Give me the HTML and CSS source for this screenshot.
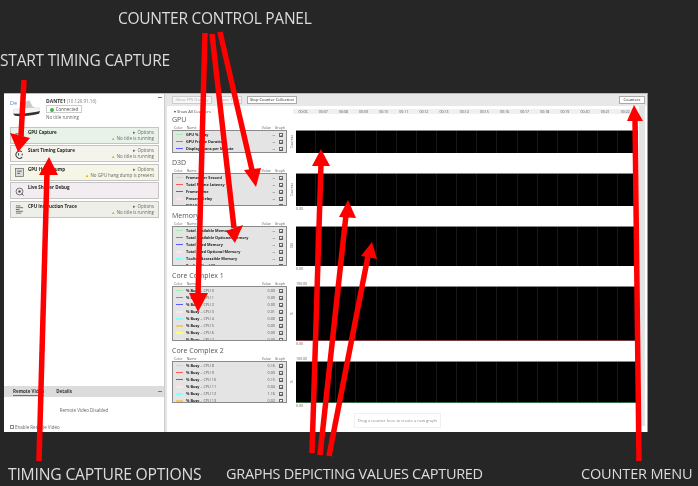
FILE: index.html
```html
<!DOCTYPE html>
<html lang="en">
<head>
<meta charset="utf-8">
<title>Counter Control Panel</title>
<link rel="stylesheet" href="styles.css">
</head>
<body>
<header class="top-captions">
  <p class="caption caption-counter">COUNTER CONTROL PANEL</p>
  <p class="caption caption-start">START TIMING CAPTURE</p>
</header>

<main class="window">
  <aside class="left">
    <div class="device">
      <span class="dev-tab">De</span>
      <svg class="console" viewBox="0 0 28 18"><path d="M11 2l6-2 3 6 3 2-9 1-7-2z" fill="#c9c9c9"/><path d="M0 10c6-2 20-3 28-2v4c-8 2-20 3-28 2z" fill="#f4f4f4" stroke="#ccc" stroke-width=".4"/><path d="M0 14c8 0 20-1 28-3l-1 3c-8 2-19 3-25 2z" fill="#333"/></svg>
      <div class="device-info">
        <div class="device-name"><b>DANTE1</b> <span>(10.120.91.16)</span></div>
        <div class="pill"><i class="dot"></i>Connected</div>
        <div class="no-title">No title running</div>
      </div>
      <span class="collapse"></span>
    </div>

    <section class="card card-green">
      <svg class="card-icon" viewBox="0 0 10 10"><rect x="1" y="2" width="8" height="6" fill="none" stroke="#555"/></svg>
      <b>GPU Capture</b>
      <div class="card-side"><span>▸ Options</span><span><em>▲</em> No title is running</span></div>
    </section>
    <section class="card card-cream">
      <svg class="card-icon" viewBox="0 0 10 10"><path d="M7.5 2A4 4 0 1 0 8 8M4 3.5v2.500M8 4v2" fill="none" stroke="#444" stroke-width="1.200"/></svg>
      <b>Start Timing Capture</b>
      <div class="card-side"><span>▸ Options</span><span><em>▲</em> No title is running</span></div>
    </section>
    <section class="card card-yellow">
      <svg class="card-icon" viewBox="0 0 10 10"><rect x=".5" y=".5" width="9" height="9" fill="#ddd" stroke="#666" stroke-width=".8"/><path d="M2.500 3.500h5M2.500 6h3" stroke="#555"/></svg>
      <b>GPU Hang Dump</b>
      <div class="card-side"><span>▸ Options</span><span><em>▲</em> No GPU hang dump is present</span></div>
    </section>
    <section class="card card-pink">
      <svg class="card-icon" viewBox="0 0 10 10"><circle cx="5" cy="5" r="3.800" fill="none" stroke="#555" stroke-width=".9"/><circle cx="5" cy="5" r="1.300" fill="#444"/><path d="M7.500 7.500l2 2" stroke="#444"/></svg>
      <b>Live Shader Debug</b>
    </section>
    <section class="card card-grey">
      <svg class="card-icon" viewBox="0 0 10 10"><path d="M1 1h5M1 3h8M1 5h4M1 7h8M1 9h6" stroke="#555" stroke-width=".9"/></svg>
      <b>CPU Instruction Trace</b>
      <div class="card-side"><span>▸ Options</span><span><em>▲</em> No title is running</span></div>
    </section>

    <section class="remote">
      <div class="tabs"><b class="tab-active">Remote Video</b><b>Details</b><span class="collapse"></span></div>
      <div class="remote-body">Remote Video Disabled</div>
      <label class="remote-check"><i></i>Enable Remote Video</label>
    </section>
  </aside>

  <section class="right">
    <div class="toolbar">
      <span class="btn btn-off btn-fps">Show FPS Overlay</span>
      <span class="btn btn-off btn-pause">Pause Trace</span>
      <span class="btn btn-stop">Stop Counter Collection</span>
      <span class="btn btn-counters">Counters</span>
    </div>
    <div class="content">
      <div class="counters">
        <div class="show-all">▾ Show All Counters</div>

        <h2>GPU</h2>
        <div class="cols"><span>Color</span><span>Name</span><span class="col-value">Value</span><span>Graph</span></div>
        <div class="panel panel-1">
          <div class="row"><i class="sw s1"></i><b>GPU % Busy</b><span class="val">--</span><span class="x">×</span></div>
          <div class="row"><i class="sw s2"></i><b>GPU Frame Duration</b><span class="val">--</span><span class="x">×</span></div>
          <div class="row"><i class="sw s3"></i><b>Display Scans per Minute</b><span class="val">--</span><span class="x">×</span></div>
        </div>

        <h2>D3D</h2>
        <div class="cols"><span>Color</span><span>Name</span><span class="col-value">Value</span><span>Graph</span></div>
        <div class="panel panel-2">
          <div class="row"><i class="sw s1"></i><b>Frames per Second</b><span class="val">--</span><span class="x">×</span></div>
          <div class="row"><i class="sw s2"></i><b>Total Frame Latency</b><span class="val">--</span><span class="x">×</span></div>
          <div class="row"><i class="sw s3"></i><b>Frame Time</b><span class="val">--</span><span class="x">×</span></div>
          <div class="row"><i class="sw s4"></i><b>Present Delay</b><span class="val">--</span><span class="x">×</span></div>
          <div class="row"><i class="sw s5"></i><b>BVH Surfaces</b><span class="val">--</span><span class="x">×</span></div>
        </div>

        <h2>Memory</h2>
        <div class="cols"><span>Color</span><span>Name</span><span class="col-value">Value</span><span>Graph</span></div>
        <div class="panel panel-3">
          <div class="row"><i class="sw s1"></i><b>Total Available Memory</b><span class="val">--</span><span class="x">×</span></div>
          <div class="row"><i class="sw s2"></i><b>Total Available Optional Memory</b><span class="val">--</span><span class="x">×</span></div>
          <div class="row"><i class="sw s3"></i><b>Total Used Memory</b><span class="val">--</span><span class="x">×</span></div>
          <div class="row"><i class="sw s4"></i><b>Total Used Optional Memory</b><span class="val">--</span><span class="x">×</span></div>
          <div class="row"><i class="sw s5"></i><b>Tooling Accessible Memory</b><span class="val">--</span><span class="x">×</span></div>
          <div class="row"><i class="sw s6"></i><b>Tooling Used Memory</b><span class="val">--</span><span class="x">×</span></div>
        </div>

        <h2>Core Complex 1</h2>
        <div class="cols"><span>Color</span><span>Name</span><span class="col-value">Value</span><span>Graph</span></div>
        <div class="panel panel-4">
          <div class="row"><i class="sw s1"></i><b>% Busy</b> – CPU 0<span class="val">0.00</span><span class="x">×</span></div>
          <div class="row"><i class="sw s2"></i><b>% Busy</b> – CPU 1<span class="val">0.00</span><span class="x">×</span></div>
          <div class="row"><i class="sw s3"></i><b>% Busy</b> – CPU 2<span class="val">0.00</span><span class="x">×</span></div>
          <div class="row"><i class="sw s4"></i><b>% Busy</b> – CPU 3<span class="val">0.01</span><span class="x">×</span></div>
          <div class="row"><i class="sw s5"></i><b>% Busy</b> – CPU 4<span class="val">0.00</span><span class="x">×</span></div>
          <div class="row"><i class="sw s6"></i><b>% Busy</b> – CPU 5<span class="val">0.00</span><span class="x">×</span></div>
          <div class="row"><i class="sw s7"></i><b>% Busy</b> – CPU 6<span class="val">0.00</span><span class="x">×</span></div>
          <div class="row"><i class="sw s4"></i><b>% Busy</b> – CPU 7<span class="val">0.00</span><span class="x">×</span></div>
        </div>

        <h2>Core Complex 2</h2>
        <div class="cols"><span>Color</span><span>Name</span><span class="col-value">Value</span><span>Graph</span></div>
        <div class="panel panel-5">
          <div class="row"><i class="sw s1"></i><b>% Busy</b> – CPU 8<span class="val">0.16</span><span class="x">×</span></div>
          <div class="row"><i class="sw s2"></i><b>% Busy</b> – CPU 9<span class="val">0.03</span><span class="x">×</span></div>
          <div class="row"><i class="sw s3"></i><b>% Busy</b> – CPU 10<span class="val">0.15</span><span class="x">×</span></div>
          <div class="row"><i class="sw s4"></i><b>% Busy</b> – CPU 11<span class="val">0.04</span><span class="x">×</span></div>
          <div class="row"><i class="sw s5"></i><b>% Busy</b> – CPU 12<span class="val">1.16</span><span class="x">×</span></div>
          <div class="row"><i class="sw s6"></i><b>% Busy</b> – CPU 13<span class="val">0.02</span><span class="x">×</span></div>
        </div>
      </div>

      <div class="graphs">
        <div class="timeline">
          <span>00:06</span><span>00:07</span><span>00:08</span><span>00:09</span><span>00:10</span><span>00:11</span><span>00:12</span><span>00:13</span><span>00:14</span><span>00:15</span><span>00:16</span><span>00:17</span><span>00:18</span><span>00:19</span><span>00:20</span><span>00:21</span><span>00:22</span>
        </div>
        <div class="graph panel-1"><span class="unit">Counter</span><div class="plot"></div></div>
        <div class="scale"></div>
        <div class="graph panel-2"><span class="unit">Counter</span><div class="plot"></div></div>
        <div class="scale"><span>0.00</span></div>
        <div class="graph panel-3"><span class="unit">GB</span><div class="plot"></div></div>
        <div class="scale"><span>0.00</span><span>100.00</span></div>
        <div class="graph panel-4"><span class="unit">%</span><div class="plot plot-red"></div></div>
        <div class="scale"><span>0.00</span><span>100.00</span></div>
        <div class="graph panel-5"><span class="unit">%</span><div class="plot plot-green"></div></div>
        <div class="scale scale-last"><span>0.00</span></div>
        <div class="drop">Drag a counter here to create a new graph</div>
      </div>
      <div class="scrollbar"></div>
    </div>
  </section>
</main>

<footer class="bottom-captions">
  <p class="caption caption-options">TIMING CAPTURE OPTIONS</p>
  <p class="caption caption-graphs">GRAPHS DEPICTING VALUES CAPTURED</p>
  <p class="caption caption-menu">COUNTER MENU</p>
</footer>

<svg class="arrows" viewBox="0 0 698 486" aria-hidden="true">
  <g class="shafts">
    <path d="M24 80L21 136"/>
    <path d="M39 461L47 172"/>
    <path d="M205 33L198 296"/>
    <path d="M212 34L234 228"/>
    <path d="M220 32L252 170"/>
    <path d="M312 453L321 163"/>
    <path d="M320 455L346 215"/>
    <path d="M329 456L368 256"/>
    <path d="M639 461L635 118"/>
  </g>
  <g class="heads">
    <polygon points="10,133 30,138 18,152"/>
    <polygon points="39,175 58,175 49,157"/>
    <polygon points="189,293 208,293 198,312"/>
    <polygon points="226,231 243,225 235,243"/>
    <polygon points="244,170 261,168 256,187"/>
    <polygon points="312,166 330,166 321,149"/>
    <polygon points="339,217 356,218 348,200"/>
    <polygon points="361,256 377,259 372,242"/>
    <polygon points="627,121 643,121 634,105"/>
  </g>
</svg>
</body>
</html>
```

FILE: styles.css
```css
* { box-sizing: border-box; }

html, body { margin: 0; padding: 0; }

body {
  width: 698px;
  height: 486px;
  overflow: hidden;
  position: relative;
  background: #262626;
  font-family: "Open Sans", "Liberation Sans", sans-serif;
  color: #333;
}

p { margin: 0; }

.caption {
  color: #dcdcdc;
  font-family: "Open Sans", sans-serif;
  font-size: 15.500px;
  line-height: 18px;
  white-space: nowrap;
  filter: blur(.25px);
}

.top-captions { height: 93px; padding-top: 9px; }
.caption-counter { padding-left: 118px; letter-spacing: -.25px; }
.caption-start { padding-top: 24px; padding-left: 0; letter-spacing: -.2px; }

.window {
  width: 644px;
  height: 339px;
  margin-left: 4px;
  display: flex;
  background: #fff;
  border-top: 1px solid #bbb;
  border-right: 1px solid #999;
  filter: blur(.6px);
  font-size: 4.5px;
  line-height: 6px;
  overflow: hidden;
}

.left {
  width: 161px;
  flex: none;
  display: flex;
  flex-direction: column;
  padding-left: 6px;
  border-right: 1px solid #ccc;
}

.device { height: 33px; display: flex; position: relative; }
.dev-tab { color: #5f7fd0; font-size: 5.5px; margin-top: 6px; width: 0; }
.console { width: 27px; height: 18px; margin: 6px 0 0 3px; flex: none; }
.device-info { margin-left: 6px; margin-top: 4px; }
.device-name b { font-size: 5px; }
.device-name span { color: #777; }
.pill {
  width: 36px;
  height: 8px;
  margin: 1px 0;
  border: 1px solid #ccc;
  text-align: center;
  line-height: 6px;
  color: #555;
}
.dot {
  display: inline-block;
  width: 4px;
  height: 4px;
  border-radius: 50%;
  background: #3cb54a;
  margin-right: 2px;
  vertical-align: -.5px;
}
.no-title { color: #666; }

.collapse {
  position: absolute;
  right: 2px;
  top: 3px;
  width: 4px;
  height: 1px;
  background: #777;
}

.card {
  height: 17px;
  width: 149px;
  margin-bottom: 1.400px;
  border: 1px solid #c4c4c4;
  display: flex;
  padding: 1px 4px 0 4px;
  font-size: 4.500px;
}
.card b { color: #222; margin-top: 0; }
.card-icon { width: 9px; height: 9px; margin: 2.500px 4px 0 0; flex: none; }
.card-green { background: #e9f2e9; }
.card-cream { background: #f5f4ec; }
.card-yellow { background: #f6f6e6; }
.card-pink { background: #f3ecf1; }
.card-grey { background: #efefea; }
.card-side {
  margin-left: auto;
  display: flex;
  flex-direction: column;
  align-items: flex-end;
  color: #666;
}
.card-side em { color: #e4b800; font-style: normal; }

.remote { margin-top: auto; margin-left: -6px; position: relative; }
.tabs {
  height: 11px;
  display: flex;
  gap: 12px;
  padding: 2px 0 0 9px;
  background: #dcdcdc;
  position: relative;
  font-size: 4.500px;
}
.tabs .collapse { top: 5px; }
.tab-active { border-bottom: 1px solid #4a8a5a; height: 8px; }
.remote-body { height: 24px; padding-top: 10px; text-align: center; color: #666; }
.remote-check { display: flex; align-items: center; height: 11px; padding-left: 6px; color: #666; }
.remote-check i { width: 4px; height: 4px; border: 1px solid #888; margin-right: 1px; }

.right { flex: 1; min-width: 0; display: flex; flex-direction: column; border-left: 2px solid #e4e4e4; }

.toolbar {
  height: 12px;
  flex: none;
  display: flex;
  align-items: center;
  padding: 0 2px 0 5px;
  background: #e8e8e8;
  font-size: 4px;
}
.btn {
  height: 8px;
  border: 1px solid #ccc;
  background: #f7f7f7;
  line-height: 6px;
  text-align: center;
  white-space: nowrap;
}
.btn-off { color: #aaa; }
.btn-fps { width: 40px; margin-right: 5px; }
.btn-pause { width: 25px; margin-right: 5px; }
.btn-stop { width: 50px; color: #222; border-color: #aaa; background: #fff; }
.btn-counters { width: 26px; margin-left: auto; color: #222; border-color: #aaa; background: #fff; }

.content { flex: 1; min-height: 0; display: flex; }

.counters { width: 121px; flex: none; padding-left: 5px; }
.show-all { height: 9px; padding-top: 3px; padding-left: 2px; color: #444; font-size: 4px; }

h2 {
  margin: 0;
  height: 10px;
  font-size: 7px;
  line-height: 10px;
  font-weight: 400;
  color: #555;
}
.panel + h2 { margin-top: 5px; }

.cols {
  height: 5px;
  display: flex;
  gap: 4px;
  padding: 0 2px;
  width: 115px;
  font-size: 3.500px;
  line-height: 5px;
  color: #666;
}
.col-value { margin-left: auto; }

.panel {
  width: 115px;
  border: 1px solid #8a8a8a;
  background: #e4e4e4;
  overflow: hidden;
}
.panel-1 { height: 23px; }
.panel-2 { height: 33px; }
.panel-3 { height: 40px; }
.panel-4 { height: 55px; }
.panel-5 { height: 42px; }

.row {
  height: 7.100px;
  display: flex;
  align-items: center;
  font-size: 3.800px;
  color: #555;
  white-space: pre;
}
.row b { color: #222; }
.sw { width: 7px; height: 1.500px; margin: 0 3px 0 3px; flex: none; }
.s1 { background: #a4f0a4; }
.s2 { background: #ff5a5a; }
.s3 { background: #5a5aff; }
.s4 { background: #ffe4ea; }
.s5 { background: #80ffff; }
.s6 { background: #f0c870; }
.s7 { background: #ffff66; }
.val { margin-left: auto; width: 8px; text-align: right; }
.x {
  width: 4px;
  height: 4px;
  margin: 0 3px 0 4px;
  background: #fff;
  border: .5px solid #666;
  color: #000;
  font-size: 4px;
  line-height: 3px;
  text-align: center;
}

.graphs { flex: 1; min-width: 0; display: flex; flex-direction: column; }

.timeline {
  height: 24px;
  flex: none;
  display: flex;
  padding: 3px 0 0 5px;
  font-size: 3.500px;
  color: #555;
}
.timeline span {
  width: 20.150px;
  height: 5px;
  flex: none;
  line-height: 5px;
  text-align: center;
  background: #f0f0f0;
}

.graph { display: flex; flex: none; }
.unit {
  width: 8px;
  flex: none;
  writing-mode: vertical-rl;
  transform: rotate(180deg);
  text-align: center;
  font-size: 3.500px;
  line-height: 8px;
  color: #4a6a8a;
}
.plot {
  flex: 1;
  background-color: #000;
  background-image: repeating-linear-gradient(90deg, transparent 0 19.150px, #181818 19.150px 20.150px);
  border-top: 1px solid #888;
}
.plot-red { border-bottom: 1px solid #7a4040; }
.plot-green { border-bottom: 1px solid #2f6a40; }

.scale {
  height: 20px;
  flex: none;
  display: flex;
  flex-direction: column;
  justify-content: space-between;
  padding-left: 8px;
  font-size: 3.500px;
  line-height: 5px;
  color: #555;
}
.scale-last { height: 10px; }

.drop {
  width: 87px;
  height: 15px;
  margin: 0 0 0 66px;
  border: 1px solid #f0f0f0;
  text-align: center;
  line-height: 13px;
  font-size: 4px;
  color: #888;
}

.scrollbar { width: 6px; flex: none; margin: 0 2px 6px 1px; background: #e4e4e4; }

.bottom-captions { position: relative; display: flex; padding-top: 33px; }
.caption-options { width: 226px; padding-left: 8px; letter-spacing: -.2px; font-size: 15.700px; }
.caption-graphs { width: 355px; letter-spacing: -.3px; font-size: 14.500px; }
.caption-menu { letter-spacing: -.15px; font-size: 14.500px; }

.arrows { position: absolute; left: 0; top: 0; width: 698px; height: 486px; filter: blur(.3px); }
.shafts path { stroke: #f00; stroke-width: 5.500; fill: none; }
.heads polygon { fill: #f00; }
```
